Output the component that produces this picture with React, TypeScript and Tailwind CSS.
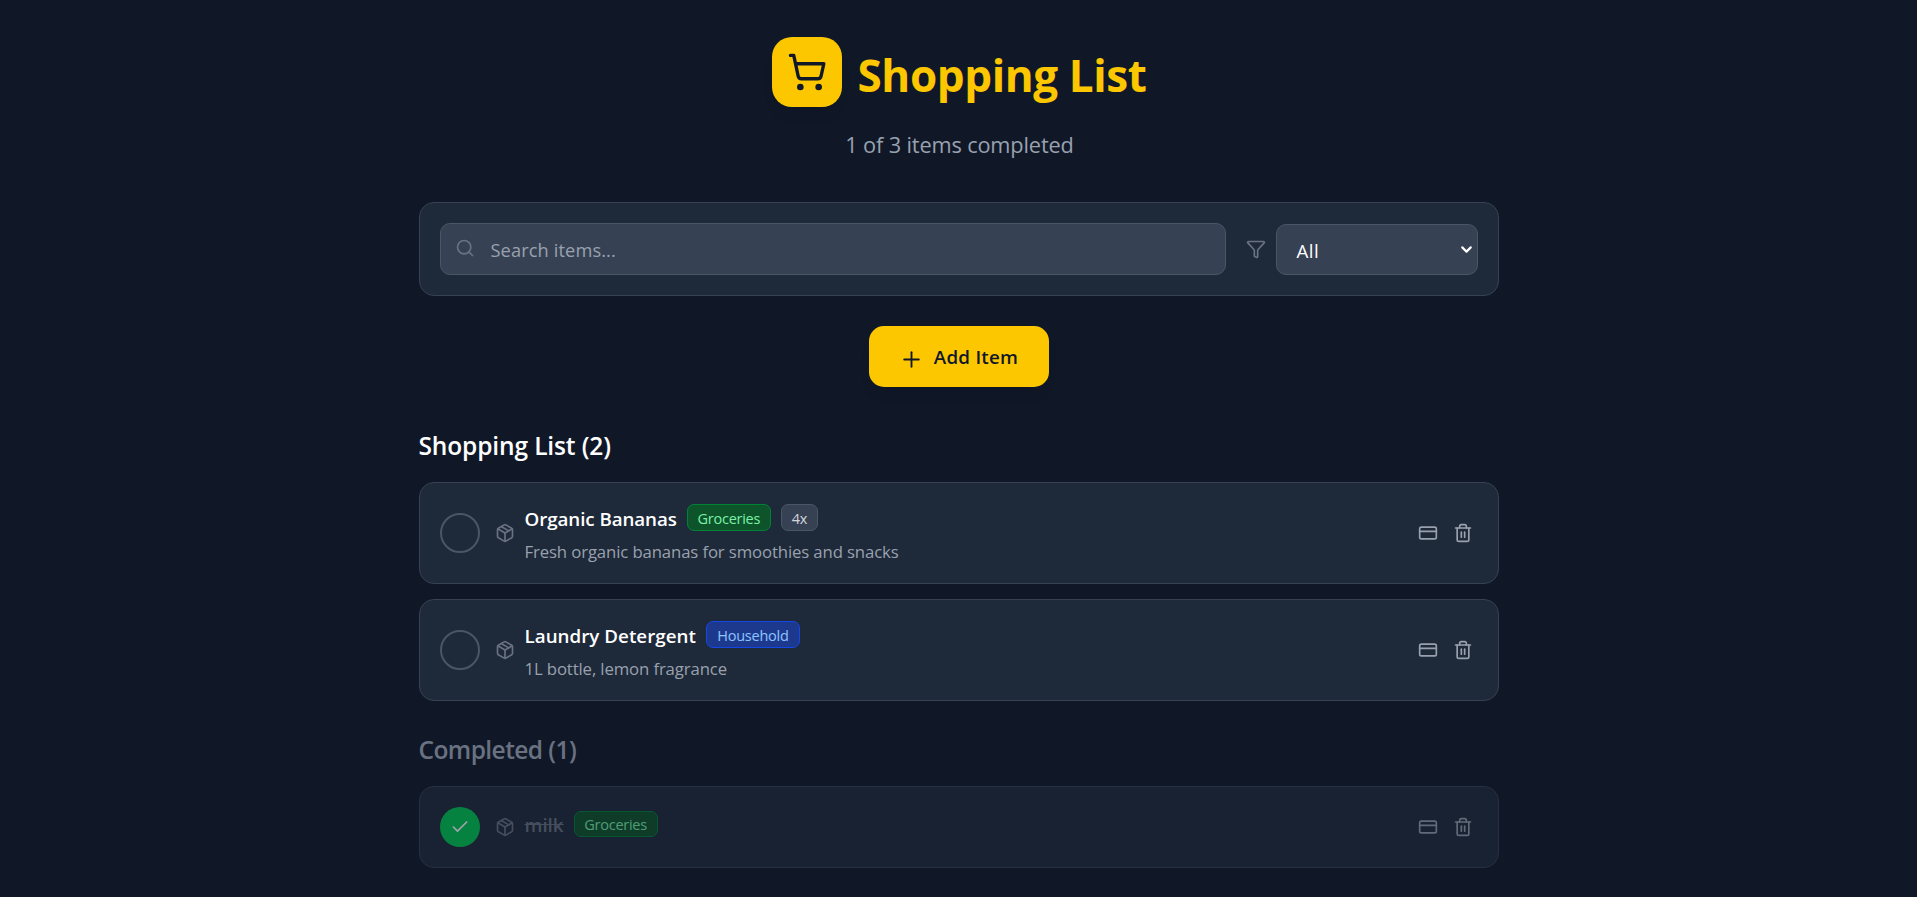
import { Check, ChevronDown, CreditCard, Funnel, Package, Plus, Search, ShoppingCart, Trash2 } from "lucide-react";

type Category = "Groceries" | "Household";

interface Item {
  name: string;
  nameClass: string;
  category: Category;
  quantity?: string;
  note?: string;
  done?: boolean;
}

const categoryStyles: Record<Category, string> = {
  Groceries: "bg-green-900 border-green-700 text-green-300 w-[84px]",
  Household: "bg-blue-900 border-blue-700 text-blue-300 w-[94px]",
};

const active: Item[] = [
  {
    name: "Organic Bananas",
    nameClass: "tracking-[-0.07px]",
    category: "Groceries",
    quantity: "4x",
    note: "Fresh organic bananas for smoothies and snacks",
  },
  {
    name: "Laundry Detergent",
    nameClass: "tracking-[0.03px]",
    category: "Household",
    note: "1L bottle, lemon fragrance",
  },
];

const completed: Item[] = [{ name: "milk", nameClass: "", category: "Groceries", done: true }];

const tag =
  "flex shrink-0 items-center justify-center rounded-[7px] border pt-[3px] text-[14.5px] leading-none tracking-[-0.25px]";

function ItemCard({ item }: { item: Item }) {
  return (
    <li
      className={`flex items-center rounded-[15px] border border-gray-700 bg-gray-800 px-5 ${
        item.done ? "h-[82px] opacity-60" : "h-[102px]"
      }`}
    >
      <button
        className={`flex size-10 shrink-0 items-center justify-center rounded-full ${
          item.done ? "bg-green-500 text-white" : "border-2 border-gray-600"
        }`}
      >
        {item.done && <Check size={20} />}
      </button>
      <Package size={20} className="ml-[15px] mr-2.5 shrink-0 text-gray-500" />
      <div className={`flex-1 ${item.done ? "pb-1.5" : "h-[60px] pt-px"}`}>
        <div className="flex h-[27px] items-center gap-2.5">
          <h3
            className={`text-[18.75px] leading-[27px] font-semibold ${item.nameClass} ${
              item.done ? "text-gray-500 line-through" : "pt-0.5 text-white"
            }`}
          >
            {item.name}
          </h3>
          <span className={`${tag} ${item.done ? "h-[26px]" : "h-[27px]"} ${categoryStyles[item.category]}`}>
            {item.category}
          </span>
          {item.quantity && (
            <span className={`${tag} h-[27px] w-[37px] border-gray-600 bg-gray-700 text-gray-300`}>
              {item.quantity}
            </span>
          )}
        </div>
        {item.note && (
          <p className="mt-2 text-[16.75px] leading-[25px] tracking-[-0.13px] text-gray-400">{item.note}</p>
        )}
      </div>
      <div className="flex gap-[5px] text-gray-400">
        <button className="p-[5px]">
          <CreditCard size={20} />
        </button>
        <button className="p-[5px]">
          <Trash2 size={20} />
        </button>
      </div>
    </li>
  );
}

export default function App() {
  return (
    <div className="h-[897px] overflow-hidden bg-gray-900 pt-[37px] font-['Open_Sans','Noto_Sans',sans-serif]">
      <main className="mx-auto flex w-[1080px] flex-col">
        <header className="flex flex-col items-center pl-0.5">
          <div className="flex h-[70px] items-center gap-[15px]">
            <div className="flex size-[70px] items-center justify-center rounded-[20px] bg-yellow-400 text-gray-900 shadow-lg shadow-black/5">
              <ShoppingCart size={40} />
            </div>
            <h1 className="pt-[5px] text-[44px] leading-[56px] font-bold tracking-[-0.38px] text-yellow-400">
              Shopping List
            </h1>
          </div>
          <p className="mt-5 text-[21.75px] leading-[35px] tracking-[-0.15px] text-gray-400">1 of 3 items completed</p>
        </header>

        <section className="mt-10 flex h-[94px] items-center rounded-[15px] border border-gray-700 bg-gray-800 px-5">
          <div className="flex h-[52px] w-[786px] items-center rounded-[10px] border border-gray-600 bg-gray-700 pl-3.5">
            <Search size={20} className="mb-0.5 text-gray-500" />
            <input
              placeholder="Search items..."
              className="mt-0.5 ml-4 flex-1 bg-transparent text-[18.25px] tracking-[0.1px] outline-none placeholder:text-gray-400"
            />
          </div>
          <Funnel size={20} className="ml-5 text-gray-500" />
          <div className="mt-px ml-2.5 flex h-[51px] flex-1 items-center justify-between rounded-[10px] border border-gray-600 bg-gray-700 pr-0.5 pl-5 text-[18.75px] text-white">
            <span className="pt-[3px] tracking-[0.4px]">All</span>
            <ChevronDown size={17} strokeWidth={3} />
          </div>
        </section>

        <button className="mt-[30px] flex h-[61px] w-[180px] items-center justify-center gap-2.5 self-center rounded-[15px] bg-yellow-400 text-gray-900 shadow-lg shadow-black/5">
          <Plus size={25} strokeWidth={1.8} className="mt-1.5" />
          <span className="pt-0.5 text-[18.75px] font-semibold tracking-[0.25px]">Add Item</span>
        </button>

        <section className="mt-[41px]">
          <h2 className="text-[24.5px] leading-[35px] font-semibold tracking-[-0.13px] text-white">Shopping List (2)</h2>
          <ul className="mt-[19px] flex flex-col gap-[15px]">
            {active.map((item) => (
              <ItemCard key={item.name} item={item} />
            ))}
          </ul>
        </section>

        <section className="mt-[31px]">
          <h2 className="text-[24.5px] leading-[35px] font-semibold tracking-[-0.57px] text-gray-500">
            Completed (1)
          </h2>
          <ul className="mt-[19px] flex flex-col gap-[15px]">
            {completed.map((item) => (
              <ItemCard key={item.name} item={item} />
            ))}
          </ul>
        </section>
      </main>
    </div>
  );
}
